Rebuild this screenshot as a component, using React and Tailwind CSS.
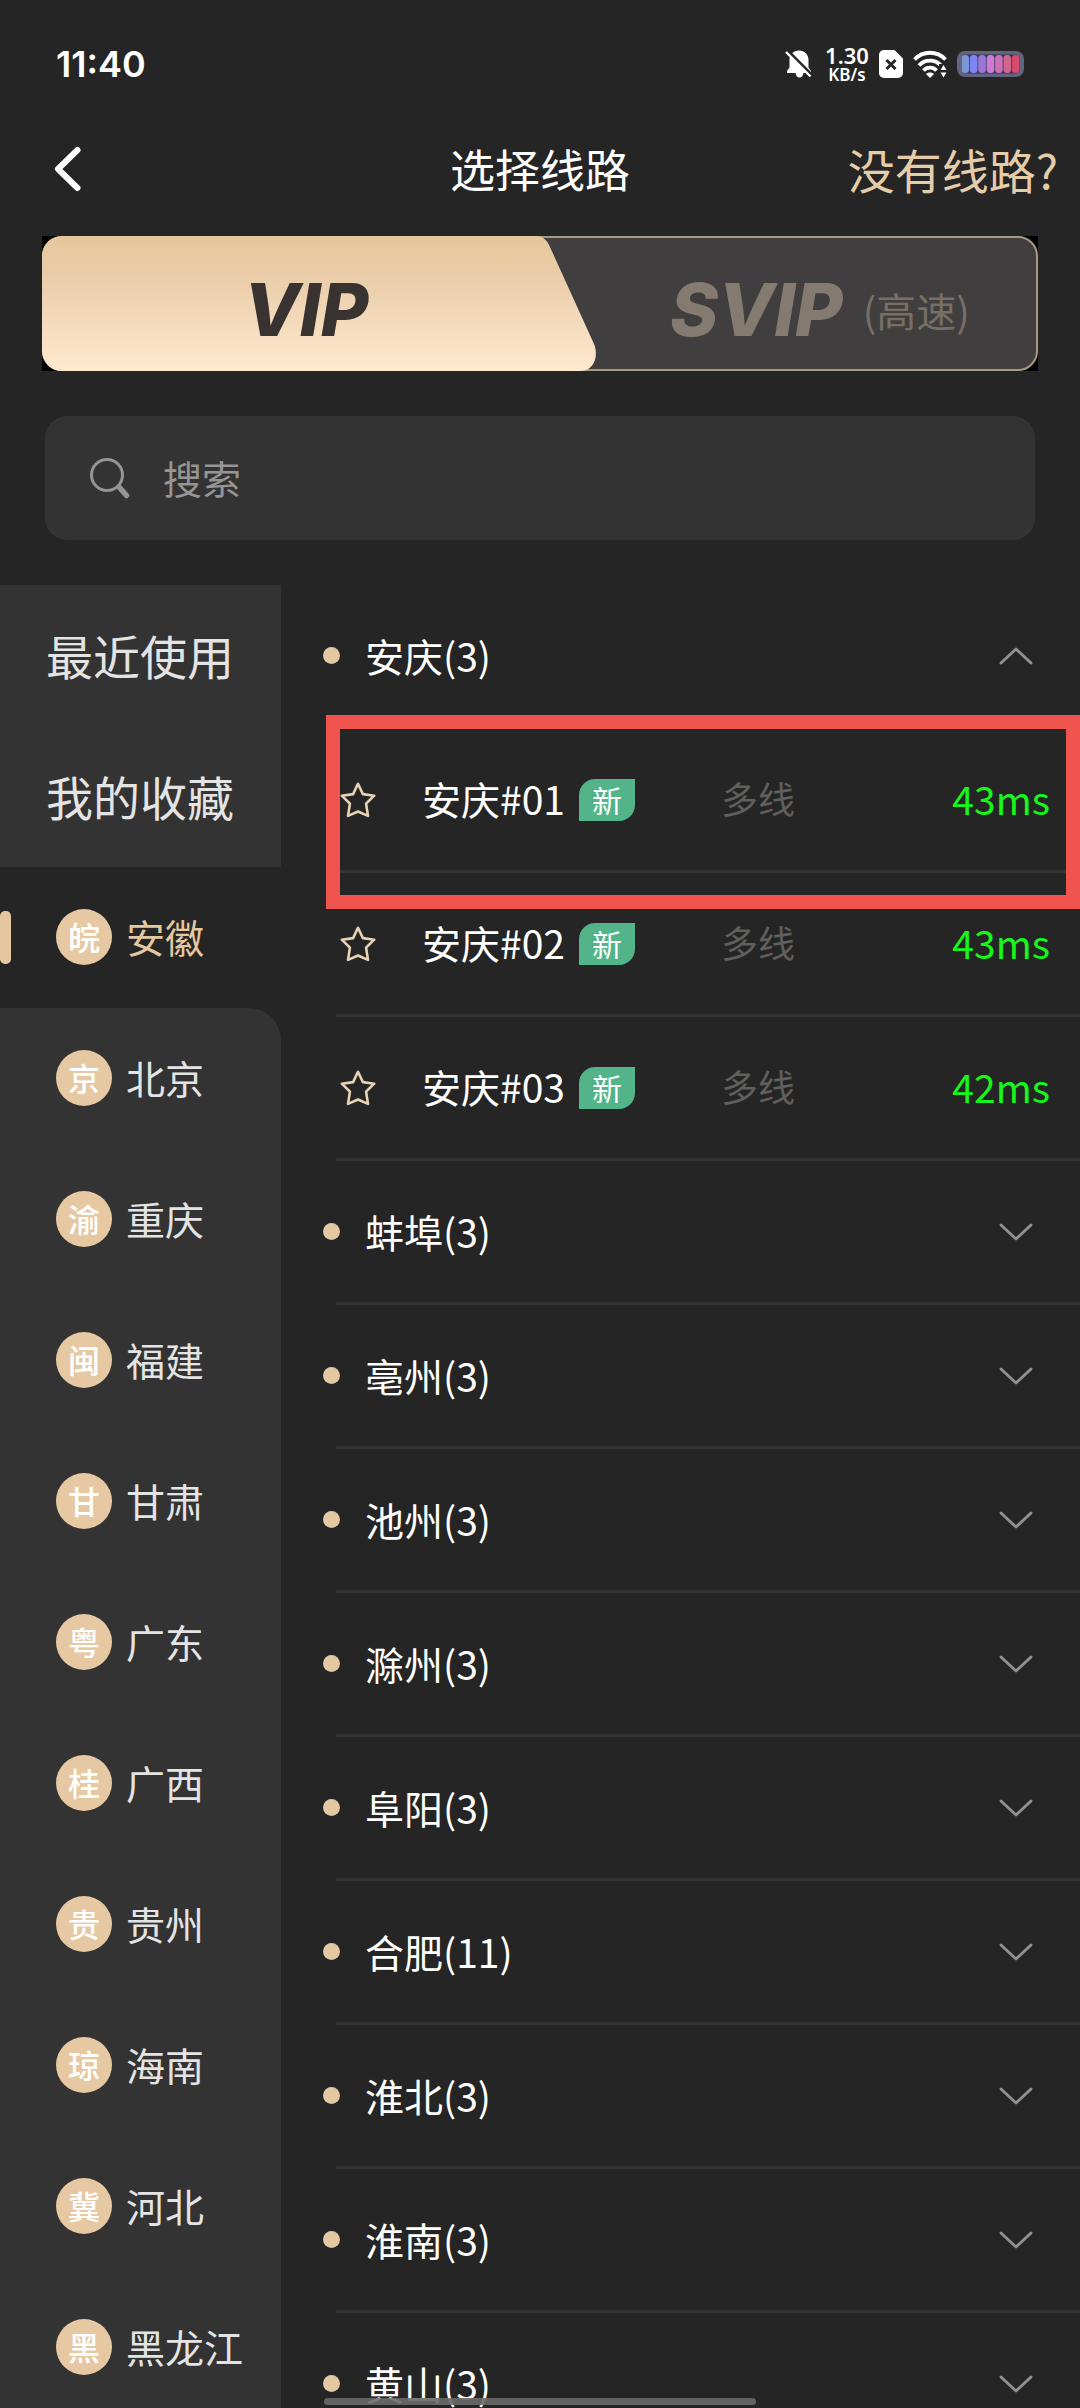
import React from "react";

const provinces = [
  { abbr: "皖", name: "安徽" },
  { abbr: "京", name: "北京" },
  { abbr: "渝", name: "重庆" },
  { abbr: "闽", name: "福建" },
  { abbr: "甘", name: "甘肃" },
  { abbr: "粤", name: "广东" },
  { abbr: "桂", name: "广西" },
  { abbr: "贵", name: "贵州" },
  { abbr: "琼", name: "海南" },
  { abbr: "冀", name: "河北" },
  { abbr: "黑", name: "黑龙江" },
];

const lines = [
  { name: "安庆#01", ping: "43ms", marked: true },
  { name: "安庆#02", ping: "43ms" },
  { name: "安庆#03", ping: "42ms" },
];

const cities = [
  "蚌埠(3)",
  "亳州(3)",
  "池州(3)",
  "滁州(3)",
  "阜阳(3)",
  "合肥(11)",
  "淮北(3)",
  "淮南(3)",
  "黄山(3)",
];

function StatusIcons() {
  return (
    <div className="flex items-center text-white">
      <svg className="h-7 w-7" viewBox="0 0 28 28" aria-hidden="true">
        <path
          fill="currentColor"
          d="M14 0.500c-5.500 0-9.500 4-9.500 9.500v7.500L2 21v2h8.500c.5 3 2 4.500 4 4.500s3.500-1.500 4-4.500H26v-2l-2.500-3.500V10c0-5.500-4-9.500-9.500-9.500z"
        />
        <path d="M2.500 0.500L27 25" stroke="#252525" strokeWidth="3" />
        <path d="M1 2L25.500 26.500" stroke="currentColor" strokeWidth="2.400" />
      </svg>
      <div className="ml-2.5 flex w-12 flex-col items-center font-['Noto_Sans'] font-semibold">
        <span className="text-[22px] leading-[22px]">1.30</span>
        <span className="text-[17px] leading-[18px]">KB/s</span>
      </div>
      <svg className="ml-2 h-7 w-6" viewBox="0 0 24 28" aria-hidden="true">
        <path
          fill="currentColor"
          d="M5 0h10.500L24 8.500V23a5 5 0 0 1-5 5H5a5 5 0 0 1-5-5V5a5 5 0 0 1 5-5z"
        />
        <path d="M7.500 10l9 9M16.500 10l-9 9" stroke="#252525" strokeWidth="3" />
      </svg>
      <svg className="ml-2.5 h-7 w-[34px]" viewBox="0 0 34 28" aria-hidden="true">
        <g fill="none" stroke="currentColor" strokeWidth="3.800">
          <path d="M1.500 9.500C10 0.500 24 0.500 32.500 9.500" />
          <path d="M6 15.500c6-6.500 16-6.500 22 0" />
          <path d="M10.500 20.500c3.500-3.800 9.500-3.800 13 0" />
        </g>
        <path fill="currentColor" d="M13 24c2-2 6-2 8 0l-4 4z" />
        <path fill="#252525" d="M26 14h8v14h-8z" />
        <path fill="currentColor" d="M27.500 20l3-5 3 5zM27.500 22.500l3 5 3-5z" />
      </svg>
      <svg className="ml-2.5 h-[26px] w-[67px]" viewBox="0 0 67 26" aria-hidden="true">
        <rect width="67" height="26" rx="8" fill="#62637f" />
        <rect x="4" y="3.500" width="59" height="19" rx="5" fill="#3a3a55" />
        <rect x="4.500" y="4" width="7.600" height="18" rx="3.500" fill="#7c97d3" />
        <rect x="12.900" y="4" width="7.600" height="18" rx="3.500" fill="#7f84f6" />
        <rect x="21.300" y="4" width="7.600" height="18" rx="3.500" fill="#9a76d8" />
        <rect x="29.700" y="4" width="7.600" height="18" rx="3.500" fill="#cd7bd4" />
        <rect x="38.100" y="4" width="7.600" height="18" rx="3.500" fill="#cf70b6" />
        <rect x="46.500" y="4" width="7.600" height="18" rx="3.500" fill="#d0658e" />
        <rect x="54.900" y="4" width="7.600" height="18" rx="3.500" fill="#d84a6b" />
      </svg>
    </div>
  );
}

function Chevron({ up }) {
  return (
    <svg className="h-5 w-9" viewBox="0 0 36 20" fill="none" aria-hidden="true">
      <path
        d={up ? "M3 17L18 3l15 14" : "M3 3l15 14L33 3"}
        stroke="#8f8f8f"
        strokeWidth="3"
        strokeLinecap="round"
        strokeLinejoin="round"
      />
    </svg>
  );
}

function CityRow({ name, open }) {
  return (
    <li className="flex h-36 shrink-0">
      <button
        type="button"
        aria-expanded={open}
        className="relative flex flex-1 items-center pr-[46px] pb-[3px] pl-[42px] text-left"
      >
        <span className="h-[17px] w-[17px] rounded-full bg-[#e6c8a0]" />
        <span className="ml-[25px] flex-1 pb-0.5 text-[39px] leading-[48px] text-white">{name}</span>
        <Chevron up={open} />
        <span className="absolute right-0 bottom-0 left-[55px] h-[3px] bg-[#333]" />
      </button>
    </li>
  );
}

function LineRow({ name, ping, marked }) {
  return (
    <li className="relative ml-[55px] flex h-36 shrink-0 items-center border-b-[3px] border-[#333] pr-[30px]">
      <button type="button" aria-label="收藏" className="ml-1">
        <svg className="h-9 w-9" viewBox="0 0 36 36" fill="none" aria-hidden="true">
          <path
            d="M18 1.800l4.900 10.300 11.300 1.600-8.100 8 1.900 12.200L18 29.500 8 33.900l1.900-12.200-8.100-8 11.300-1.600z"
            stroke="#e8d3b4"
            strokeWidth="2.600"
            strokeLinejoin="round"
          />
        </svg>
      </button>
      <span className="ml-[46px] pb-1 text-[39px] leading-[48px] text-white">{name}</span>
      <span className="ml-3.5 flex h-[42px] w-14 items-center justify-center rounded-tl-[16px] rounded-br-[16px] bg-[#52b488] pb-0.5 text-[30px] leading-9 text-white">
        新
      </span>
      <span className="ml-[86px] pb-1 text-[37px] leading-[48px] text-[#5f5f5f]">多线</span>
      <span className="ml-auto pb-1 text-[39px] leading-[48px] text-[#17f71b]">{ping}</span>
      {marked && (
        <span className="pointer-events-none absolute -top-3.5 right-0 -bottom-[39px] -left-2.5 z-10 border-[14px] border-[#f0544f]" />
      )}
    </li>
  );
}

export default function App() {
  return (
    <div className="relative flex h-screen flex-col overflow-hidden bg-[#252525] font-['Noto_Sans_CJK_SC',sans-serif]">
      <div className="flex h-32 shrink-0 items-center justify-between pr-14 pl-14">
        <span className="font-['Inter'] text-[36px] leading-10 font-semibold text-white">11:40</span>
        <StatusIcons />
      </div>

      <header className="grid h-[88px] shrink-0 grid-cols-[minmax(0,1fr)_auto_minmax(0,1fr)] items-center pr-[22px] pb-1.5 pl-[50px]">
        <button type="button" aria-label="返回" className="justify-self-start">
          <svg className="h-12 w-9" viewBox="0 0 36 48" fill="none" aria-hidden="true">
            <path
              d="M27.500 5L8 24l19.500 19"
              stroke="#fff"
              strokeWidth="6"
              strokeLinecap="round"
              strokeLinejoin="round"
            />
          </svg>
        </button>
        <h1 className="-ml-7 text-[45px] leading-[56px] text-white">选择线路</h1>
        <a href="#help" className="justify-self-end text-[47px] leading-[56px] whitespace-nowrap text-[#e6cdaa]">
          没有线路?
        </a>
      </header>

      <div className="relative mx-[42px] mt-5 grid h-[135px] shrink-0 grid-cols-[53%_47%] bg-black">
        <div className="absolute inset-0 rounded-[20px] border-2 border-[#a89a80] bg-[#403e3e]" />
        <svg
          className="absolute inset-y-0 left-0 h-full w-[556px]"
          viewBox="0 0 556 135"
          preserveAspectRatio="none"
          aria-hidden="true"
        >
          <defs>
            <linearGradient id="gold" x1="0" y1="0" x2="0" y2="1">
              <stop offset="0" stopColor="#e6c79c" />
              <stop offset="0.300" stopColor="#eacda9" />
              <stop offset="1" stopColor="#ffe9d0" />
            </linearGradient>
          </defs>
          <path
            fill="url(#gold)"
            d="M20 0H494C501 0 505 4 508 11L552 108C557 120 552 135 538 135H20A20 20 0 0 1 0 115V20A20 20 0 0 1 20 0z"
          />
        </svg>
        <button
          type="button"
          className="relative flex items-center justify-center pt-3 font-['Inter'] text-[73px] leading-[80px] font-extrabold text-[#383331] italic"
        >
          VIP
        </button>
        <button
          type="button"
          className="relative flex items-center gap-5 pt-3 pl-[100px] text-[#857a6f]"
        >
          <span className="font-['Inter'] text-[73px] leading-[80px] font-extrabold italic">SVIP</span>
          <span className="text-[40px] leading-[48px] text-[#776f66]">(高速)</span>
        </button>
      </div>

      <label className="mx-[45px] mt-[45px] flex h-[124px] shrink-0 items-center rounded-[22px] bg-[#333] pl-11">
        <svg className="h-11 w-11" viewBox="0 0 44 44" fill="none" aria-hidden="true">
          <circle cx="18" cy="19" r="15.500" stroke="#959595" strokeWidth="3" />
          <path d="M30.500 31.500l7 8" stroke="#959595" strokeWidth="5.500" strokeLinecap="round" />
        </svg>
        <input
          type="search"
          aria-label="搜索"
          placeholder="搜索"
          className="ml-[30px] min-w-0 flex-1 bg-transparent pb-0.5 text-[39px] leading-[56px] text-white outline-none placeholder:text-[#959595]"
        />
      </label>

      <div className="mt-[45px] flex min-h-0 flex-1">
        <nav className="w-[281px] shrink-0 overflow-y-auto bg-[#252525] [scrollbar-width:none]">
          {["最近使用", "我的收藏"].map((t) => (
            <button
              key={t}
              type="button"
              className="flex h-[141px] w-full items-center bg-[#333] pb-0.5 pl-[46px] text-[47px] leading-[56px] text-[#e4e4e4]"
            >
              {t}
            </button>
          ))}
          {provinces.map((p, i) => (
            <button
              key={p.name}
              type="button"
              className={
                "relative flex h-[141px] w-full items-center pb-0.5 pl-14 " +
                (i === 0
                  ? "bg-[#252525] text-[#e6c8a0]"
                  : i === 1
                    ? "rounded-tr-[32px] bg-[#333] text-[#e4e4e4]"
                    : "bg-[#333] text-[#e4e4e4]")
              }
            >
              {i === 0 && (
                <span className="absolute top-11 left-0 h-[53px] w-[11px] rounded-[5px] bg-[#e6c8a0]" />
              )}
              <span className="flex h-14 w-14 items-center justify-center rounded-full bg-[#e6c8a3] pb-0.5 text-[32px] leading-10 font-medium text-white">
                {p.abbr}
              </span>
              <span className="ml-3.5 pb-0.5 text-[39px] leading-[48px]">{p.name}</span>
            </button>
          ))}
        </nav>

        <ul className="flex min-w-0 flex-1 flex-col overflow-y-auto [scrollbar-width:none]">
          <CityRow name="安庆(3)" open />
          {lines.map((l) => (
            <LineRow key={l.name} {...l} />
          ))}
          {cities.map((c) => (
            <CityRow key={c} name={c} open={false} />
          ))}
        </ul>
      </div>

      <div className="absolute bottom-[3px] left-1/2 h-[7px] w-[432px] -translate-x-1/2 rounded-full bg-[#6c6a6a]/90" />
    </div>
  );
}
